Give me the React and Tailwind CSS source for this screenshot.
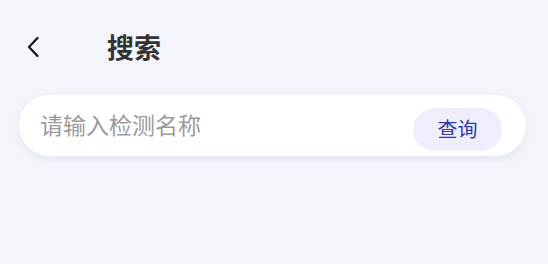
import React from 'react';

export default function App() {
  return (
    <div
      className="w-[548px] h-[264px] bg-[#f3f5fa] overflow-hidden"
      style={{ fontFamily: '"Noto Sans", "Noto Sans CJK SC", sans-serif' }}
    >
      {/* Header */}
      <div className="flex items-center h-[94px] pl-[25px]">
        <button className="w-[16px] h-[22px] flex items-center justify-center">
          <svg width="14" height="22" viewBox="0 0 14 22" fill="none">
            <path d="M11.5 2 L3 11 L11.5 20" stroke="#111" strokeWidth="2.2" strokeLinecap="round" strokeLinejoin="round" />
          </svg>
        </button>
        <div className="ml-[66px] text-[27px] font-bold text-[#333] leading-none">搜索</div>
      </div>

      {/* Search box */}
      <div className="ml-[19px] w-[507px] mt-[1px] h-[61px] bg-white rounded-full flex items-center pl-[21px] pr-[24px] shadow-[0_3px_8px_rgba(180,190,210,0.25)]">
        <input
          className="flex-1 min-w-0 bg-transparent outline-none text-[23px] text-[#333] placeholder:text-[#9a9a9a]"
          placeholder="请输入检测名称"
        />
        <button className="mt-[8px] w-[89px] h-[43px] rounded-full bg-[#efeefc] text-[#2f3a9e] text-[20px] flex items-center justify-center">
          查询
        </button>
      </div>
    </div>
  );
}
